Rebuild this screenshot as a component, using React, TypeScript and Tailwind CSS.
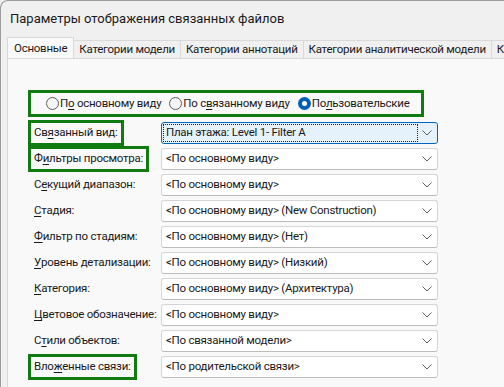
const tabs = ['Категории модели', 'Категории аннотаций', 'Категории аналитической модели', 'Категории импорта'];

const rows = [
  { label: 'Св&язанный вид:', value: 'План этажа: Level 1- Filter A', boxed: true, focused: true },
  { label: 'Ф&ильтры просмотра:', value: '<По основному виду>', boxed: true },
  { label: 'С&екущий диапазон:', value: '<По основному виду>' },
  { label: '&Стадия:', value: '<По основному виду> (New Construction)' },
  { label: '&Фильтр по стадиям:', value: '<По основному виду> (Нет)' },
  { label: '&Уровень детализации:', value: '<По основному виду> (Низкий)' },
  { label: '&Категория:', value: '<По основному виду> (Архитектура)' },
  { label: '&Цветовое обозначение:', value: '<По основному виду>' },
  { label: 'С&тили объектов:', value: '<По связанной модели>' },
  { label: 'Вло&женные связи:', value: '<По родительской связи>', boxed: true },
];

// текст с подчёркнутой буквой после "&", как в Windows
function Mnemonic({ text }: { text: string }) {
  const i = text.indexOf('&');
  if (i < 0) return <>{text}</>;
  return (
    <>
      {text.slice(0, i)}
      <span className="underline underline-offset-2">{text[i + 1]}</span>
      {text.slice(i + 2)}
    </>
  );
}

function Radio({ label, checked }: { label: string; checked?: boolean }) {
  return (
    <div className="flex items-center gap-[1px]">
      {checked ? (
        <span className="w-[13px] h-[13px] rounded-full bg-[#005fb8] flex items-center justify-center">
          <span className="w-[5px] h-[5px] rounded-full bg-white" />
        </span>
      ) : (
        <span className="w-[13px] h-[13px] rounded-full border border-[#5d5d5d] bg-[#f5f5f5]" />
      )}
      <span>
        <Mnemonic text={label} />
      </span>
    </div>
  );
}

function Chevron() {
  return (
    <svg width="10" height="6" viewBox="0 0 10 6" className="shrink-0">
      <path d="M0.5 0.5 L5 5 L9.5 0.5" fill="none" stroke="#606060" strokeWidth="1" />
    </svg>
  );
}

export default function App() {
  return (
    <div className="w-[504px] h-[387px] overflow-hidden bg-[#f0f0f0] text-[11.5px] tracking-[-0.25px] leading-none text-[#1a1a1a] font-['Roboto',sans-serif] whitespace-nowrap">
      <div className="h-full flex flex-col rounded-tl-[8px] border-l border-t border-[#9c9c9c]">
        <div className="h-[35px] shrink-0 flex items-center pl-[9px] text-[13px] tracking-normal">
          Параметры отображения связанных файлов
        </div>

        <div className="h-[22px] shrink-0 flex items-end pl-[6px] overflow-hidden">
          <div className="h-[22px] px-[6px] flex items-center border-l border-t border-r border-[#d9d9d9] bg-[#f9f9f9] -mb-px relative z-10 shrink-0">
            Основные
          </div>
          {tabs.map((t) => (
            <div key={t} className="h-[18px] px-[5px] flex items-center border-t border-r border-[#d9d9d9] bg-[#f0f0f0] shrink-0">
              {t}
            </div>
          ))}
        </div>

        <div className="flex-1 ml-[6px] border-l border-t border-[#d9d9d9] bg-[#f9f9f9] pt-[31px] pl-[20px]">
          <div className="w-[396px] h-[27px] border-[3px] border-[#107c10] flex items-center pl-[15px] gap-[8px]">
            <Radio label="П&о основному виду" />
            <Radio label="По с&вязанному виду" />
            <Radio label="По&льзовательские" checked />
          </div>

          <div className="mt-[3px] flex flex-col">
            {rows.map((r) => (
              <div key={r.label} className="h-[26px] flex items-center">
                <div className="w-[133px] h-[26px] flex items-center shrink-0">
                  <div
                    className={`h-[26px] flex items-center px-[3px] border-[3px] ${
                      r.boxed ? 'border-[#107c10]' : 'border-transparent'
                    }`}
                  >
                    <Mnemonic text={r.label} />
                  </div>
                </div>
                <div
                  className={`w-[277px] h-[22px] flex items-center justify-between pr-[5px] rounded-[3px] border ${
                    r.focused
                      ? 'border-[#0067c0] bg-[#e5f1fb]'
                      : 'border-[#d5d5d5] border-b-[#bcbcbc] bg-white'
                  }`}
                >
                  {r.focused ? (
                    <div className="ml-[1px] w-[255px] h-[18px] flex items-center pl-[3px] outline outline-1 outline-dotted outline-[#222] -outline-offset-1">
                      {r.value}
                    </div>
                  ) : (
                    <div className="pl-[4px]">{r.value}</div>
                  )}
                  <Chevron />
                </div>
              </div>
            ))}
          </div>
        </div>
      </div>
    </div>
  );
}
